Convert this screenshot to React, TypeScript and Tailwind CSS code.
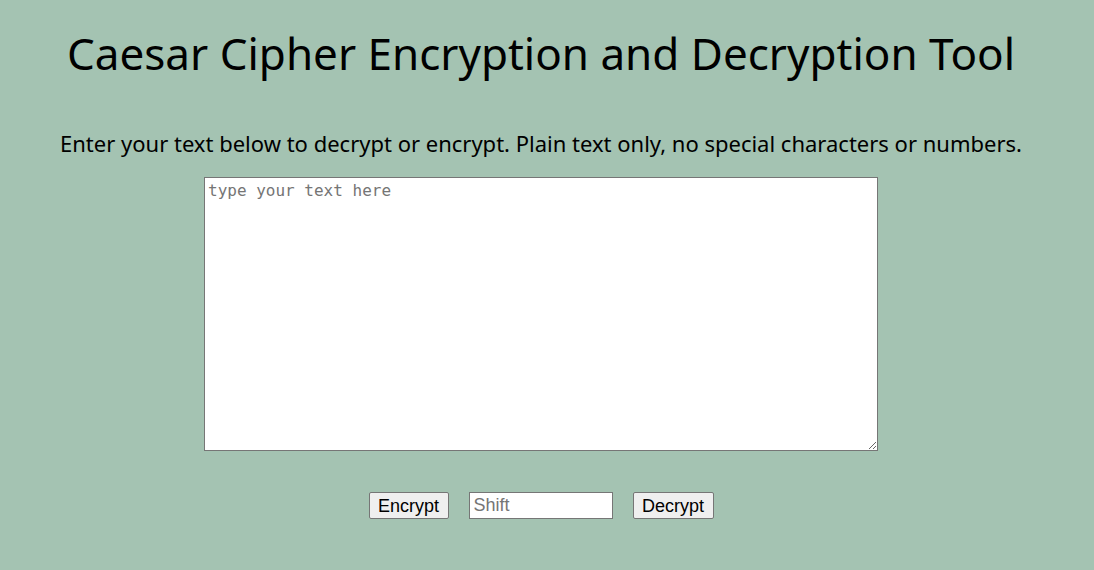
import React from "react";

export default function App() {
  return (
    <div className="min-h-[570px] w-full bg-[#a4c3b2] flex flex-col items-center pr-[12px]">
      <h1 className="mt-[25px] text-[44px] leading-[56px] text-black font-['Noto_Sans',sans-serif]">
        Caesar Cipher Encryption and Decryption Tool
      </h1>
      <p className="mt-[48px] text-[22px] leading-[28px] text-black font-['Noto_Sans',sans-serif]">
        Enter your text below to decrypt or encrypt. Plain text only, no special characters or numbers.
      </p>
      <textarea
        placeholder="type your text here"
        className="mt-[20px] w-[674px] h-[274px] bg-white border border-[#767676] px-[3px] py-[3px] text-[16px] leading-[20px] font-['DejaVu_Sans_Mono',monospace] placeholder:text-[#757575] outline-none"
      />
      <div className="mt-[41px] flex items-center gap-[20px] font-['Liberation_Sans',Arial,sans-serif]">
        <button className="h-[27px] w-[80px] bg-[#efefef] border border-[#767676] rounded-[2px] text-[18px] leading-[20px] text-black">
          Encrypt
        </button>
        <input
          placeholder="Shift"
          className="h-[27px] w-[144px] bg-white border border-[#767676] px-[4px] text-[18px] placeholder:text-[#757575] outline-none"
        />
        <button className="h-[27px] w-[81px] bg-[#efefef] border border-[#767676] rounded-[2px] text-[18px] leading-[20px] text-black">
          Decrypt
        </button>
      </div>
    </div>
  );
}
